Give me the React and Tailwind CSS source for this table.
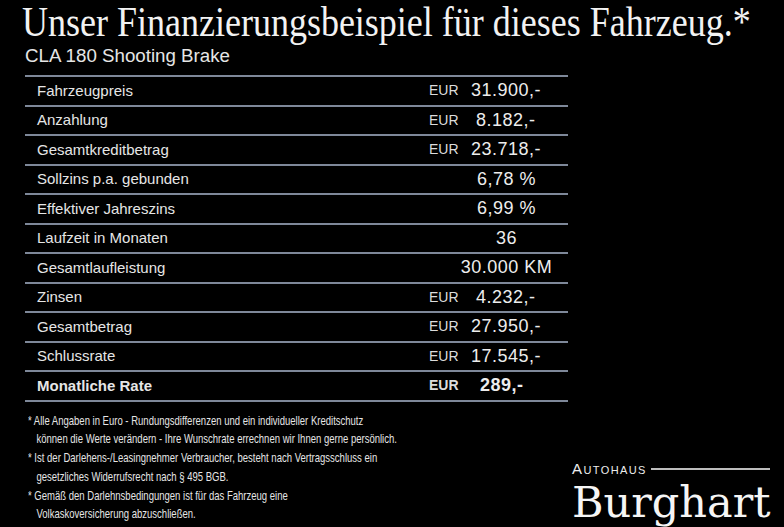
const rows = [
  { label: "Fahrzeugpreis", cur: "EUR", value: "31.900,-", pad: "pl-0" },
  { label: "Anzahlung", cur: "EUR", value: "8.182,-", pad: "pl-[5px]" },
  { label: "Gesamtkreditbetrag", cur: "EUR", value: "23.718,-", pad: "pl-0" },
  { label: "Sollzins p.a. gebunden", cur: "", value: "6,78 %" },
  { label: "Effektiver Jahreszins", cur: "", value: "6,99 %" },
  { label: "Laufzeit in Monaten", cur: "", value: "36" },
  { label: "Gesamtlaufleistung", cur: "", value: "30.000 KM" },
  { label: "Zinsen", cur: "EUR", value: "4.232,-", pad: "pl-[5px]" },
  { label: "Gesamtbetrag", cur: "EUR", value: "27.950,-", pad: "pl-0" },
  { label: "Schlussrate", cur: "EUR", value: "17.545,-", pad: "pl-0" },
  { label: "Monatliche Rate", cur: "EUR", value: "289,-", pad: "pl-[9px]", bold: true },
];

const notes = [
  [
    "Alle Angaben in Euro - Rundungsdifferenzen und ein individueller Kreditschutz",
    "können die Werte verändern - Ihre Wunschrate errechnen wir Ihnen gerne persönlich.",
  ],
  [
    "Ist der Darlehens-/Leasingnehmer Verbraucher, besteht nach Vertragsschluss ein",
    "gesetzliches Widerrufsrecht nach § 495 BGB.",
  ],
  [
    "Gemäß den Darlehnsbedingungen ist für das Fahrzeug eine",
    "Volkaskoversicherung abzuschließen.",
  ],
];

function Row({ row }) {
  const weight = row.bold ? "font-bold" : "font-normal";
  return (
    <div className="flex h-[29.5px] items-center border-b-2 border-[#7e8899]">
      <div className={`flex-1 pl-3 text-[15px] text-[#e6e6e6] ${weight}`}>
        {row.label}
      </div>
      <div className={`w-[42px] text-[14px] text-[#dcdcdc] ${weight}`}>
        {row.cur}
      </div>
      {row.cur ? (
        <div
          className={`w-[87px] whitespace-nowrap text-[18px] tracking-[0.5px] text-[#ededed] ${weight} ${row.pad}`}
        >
          {row.value}
        </div>
      ) : (
        <div className="flex w-[87px] justify-center pr-[16px]">
          <span className="whitespace-nowrap text-[18px] tracking-[0.5px] text-[#ededed]">
            {row.value}
          </span>
        </div>
      )}
      <div className="w-[10px]"></div>
    </div>
  );
}

export default function App() {
  return (
    <div className="h-[527px] w-[784px] overflow-hidden bg-black font-['Liberation_Sans',Arial,sans-serif] text-white">
      <div className="pl-[22px] pt-[2px]">
        <div className="w-max origin-left scale-x-[0.857] whitespace-nowrap font-['Liberation_Serif',serif] text-[42px] leading-[40px] text-[#f2f2f2]">
          Unser Finanzierungsbeispiel für dieses Fahrzeug.*
        </div>
      </div>
      <div className="pl-[25px] pt-[2px] text-[18px] leading-[24px] text-[#e6e6e6]">
        <div className="w-max origin-left scale-x-[1.04] whitespace-nowrap">
          CLA 180 Shooting Brake
        </div>
      </div>

      <div className="ml-[25px] mt-[7px] w-[543px] border-t-2 border-[#7e8899]">
        {rows.map((row) => (
          <Row key={row.label} row={row} />
        ))}
      </div>

      <div className="flex items-end justify-between pl-[28px] pr-[14px] pt-[10px]">
        <div className="w-[420px] text-[13.5px] leading-[18.8px] text-[#e6e6e6]">
          {notes.map((note, i) => (
            <div key={i} className="w-max origin-left scale-x-[0.705] whitespace-nowrap">
              <div>* {note[0]}</div>
              <div className="pl-[12px]">{note[1]}</div>
            </div>
          ))}
        </div>
        <div className="mb-[2px] flex w-[198px] flex-col gap-[6px]">
          <div className="flex items-center gap-[4px]">
            <span className="text-[15px] leading-[14px] tracking-[1.4px] text-[#ededed] [font-variant:small-caps]">
              Autohaus
            </span>
            <span className="h-[2px] flex-1 bg-[#bdbdbd]"></span>
          </div>
          <div className="font-['DejaVu_Serif',serif] text-[43px] leading-[40px] text-[#f5f5f5]">
            Burghart
          </div>
        </div>
      </div>
    </div>
  );
}
